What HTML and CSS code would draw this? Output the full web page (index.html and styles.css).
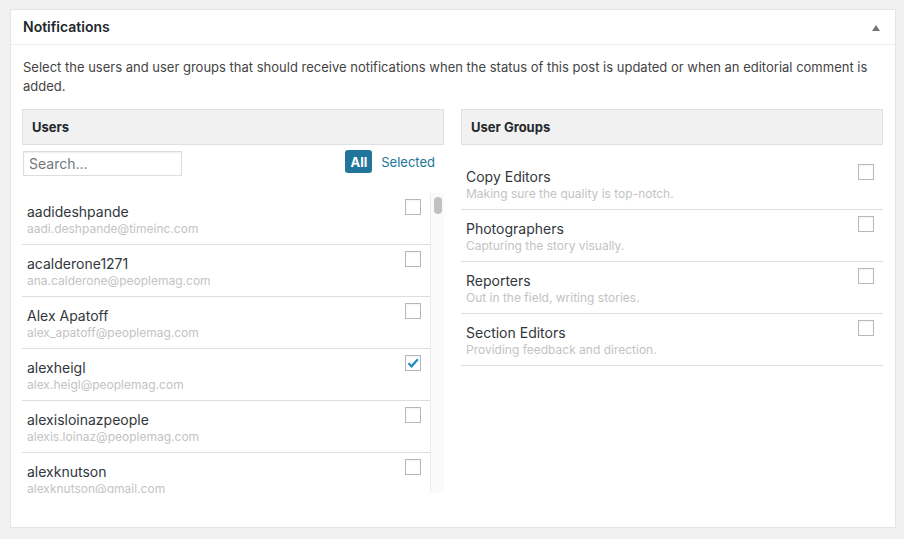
FILE: index.html
```html
<!DOCTYPE html>
<html lang="en">
<head>
<meta charset="utf-8">
<title>Notifications</title>
<link rel="stylesheet" href="styles.css">
</head>
<body>
<div class="postbox">
  <div class="hndle">
    <h2 class="title">Notifications</h2>
    <svg class="toggle" width="8" height="6" viewBox="0 0 8 6"><polygon points="4,0 8,6 0,6" fill="#72777c"/></svg>
  </div>
  <div class="inside">
    <p class="desc">Select the users and user groups that should receive notifications when the status of this post is updated or when an editorial comment is added.</p>
    <div class="cols">
      <div class="col">
        <div class="col-head">Users</div>
        <div class="toolbar">
          <input class="search" type="text" placeholder="Search...">
          <div class="filters">
            <span class="btn-all">All</span>
            <span class="btn-sel">Selected</span>
          </div>
        </div>
        <div class="list-wrap">
          <ul class="list">
            <li class="item"><div class="info"><div class="name">aadideshpande</div><div class="sub">aadi.deshpande@timeinc.com</div></div><span class="cb"></span></li>
            <li class="item"><div class="info"><div class="name">acalderone1271</div><div class="sub">ana.calderone@peoplemag.com</div></div><span class="cb"></span></li>
            <li class="item"><div class="info"><div class="name">Alex Apatoff</div><div class="sub">alex_apatoff@peoplemag.com</div></div><span class="cb"></span></li>
            <li class="item"><div class="info"><div class="name">alexheigl</div><div class="sub">alex.heigl@peoplemag.com</div></div><span class="cb checked"><svg width="14" height="14" viewBox="0 0 14 14"><path d="M2.5 7.2 L5.6 10.3 L11.8 3.2" fill="none" stroke="#1e8cbe" stroke-width="2.2"/></svg></span></li>
            <li class="item"><div class="info"><div class="name">alexisloinazpeople</div><div class="sub">alexis.loinaz@peoplemag.com</div></div><span class="cb"></span></li>
            <li class="item"><div class="info"><div class="name">alexknutson</div><div class="sub">alexknutson@gmail.com</div></div><span class="cb"></span></li>
          </ul>
          <div class="scrollbar"><div class="thumb"></div></div>
        </div>
      </div>
      <div class="col">
        <div class="col-head">User Groups</div>
        <ul class="list groups">
          <li class="item"><div class="info"><div class="name">Copy Editors</div><div class="sub">Making sure the quality is top-notch.</div></div><span class="cb"></span></li>
          <li class="item"><div class="info"><div class="name">Photographers</div><div class="sub">Capturing the story visually.</div></div><span class="cb"></span></li>
          <li class="item"><div class="info"><div class="name">Reporters</div><div class="sub">Out in the field, writing stories.</div></div><span class="cb"></span></li>
          <li class="item"><div class="info"><div class="name">Section Editors</div><div class="sub">Providing feedback and direction.</div></div><span class="cb"></span></li>
        </ul>
      </div>
    </div>
  </div>
</div>
</body>
</html>
```

FILE: styles.css
```css
* { box-sizing: border-box; }
html, body { margin: 0; padding: 0; }
body {
  background: #f1f1f1;
  font-family: Inter, "Liberation Sans", Arial, sans-serif;
  color: #32373c;
  padding: 9px 9px 0 10px;
}
.postbox {
  width: 886px;
  background: #fff;
  border: 1px solid #e5e5e5;
  box-shadow: 0 1px 1px rgba(0,0,0,0.04);
}
.hndle {
  height: 35px;
  border-bottom: 1px solid #eee;
  display: flex;
  align-items: center;
  justify-content: space-between;
  padding: 0 15px 0 12px;
}
.title {
  margin: 0;
  font-size: 14px;
  font-weight: 600;
  color: #23282d;
  line-height: 20px;
}
.toggle { margin-top: 1px; }
.inside {
  padding: 13px 12px 34px 11px;
}
.desc {
  margin: 0 0 0 1px;
  font-size: 13px;
  line-height: 19px;
  color: #444;
}
.cols {
  margin-top: 13px;
  display: flex;
  gap: 17px;
}
.col {
  width: 422px;
  display: flex;
  flex-direction: column;
}
.col-head {
  height: 36px;
  background: #f1f1f1;
  border: 1px solid #e1e1e1;
  font-size: 13px;
  font-weight: 700;
  color: #23282d;
  padding: 0 9px;
  display: flex;
  align-items: center;
}
.toolbar {
  margin-top: 5px;
  display: flex;
  justify-content: space-between;
  align-items: flex-start;
  padding-right: 9px;
}
.search {
  margin: 1px 0 0 1px;
  width: 159px;
  height: 25px;
  border: 1px solid #ddd;
  box-shadow: inset 0 1px 2px rgba(0,0,0,0.07);
  padding: 0 5px;
  font-family: inherit;
  font-size: 14px;
  color: #32373c;
  outline: none;
}
.search::placeholder { color: #72777c; }
.filters {
  display: flex;
  align-items: center;
  gap: 9px;
  height: 23px;
}
.btn-all {
  background: #21759b;
  color: #fff;
  font-size: 13px;
  font-weight: 700;
  height: 23px;
  padding: 0 5px;
  border-radius: 3px;
  display: flex;
  align-items: center;
}
.btn-sel {
  color: #21759b;
  font-size: 13px;
}
.list-wrap {
  margin-top: 17px;
  height: 300px;
  display: flex;
}
.list {
  list-style: none;
  margin: 0;
  padding: 0;
  flex: 1;
  overflow: hidden;
}
.groups { margin-top: 13px; }
.item {
  height: 52px;
  border-bottom: 1px solid #ddd;
  padding: 10px 9px 0 5px;
  display: flex;
  justify-content: space-between;
  align-items: flex-start;
}
.name {
  font-size: 14px;
  line-height: 18px;
  color: #32373c;
}
.sub {
  font-size: 12px;
  line-height: 16px;
  color: #c3c3c3;
}
.cb {
  margin-top: -4px;
  width: 16px;
  height: 16px;
  border: 1px solid #b4b9be;
  background: #fff;
  box-shadow: inset 0 1px 2px rgba(0,0,0,0.05);
  display: flex;
  align-items: center;
  justify-content: center;
}
.scrollbar {
  width: 14px;
  background: #fafafa;
  border-left: 1px solid #ececec;
  padding: 4px 0 0 3px;
}
.thumb {
  width: 8px;
  height: 17px;
  background: #c1c1c1;
  border-radius: 4px;
}
```
